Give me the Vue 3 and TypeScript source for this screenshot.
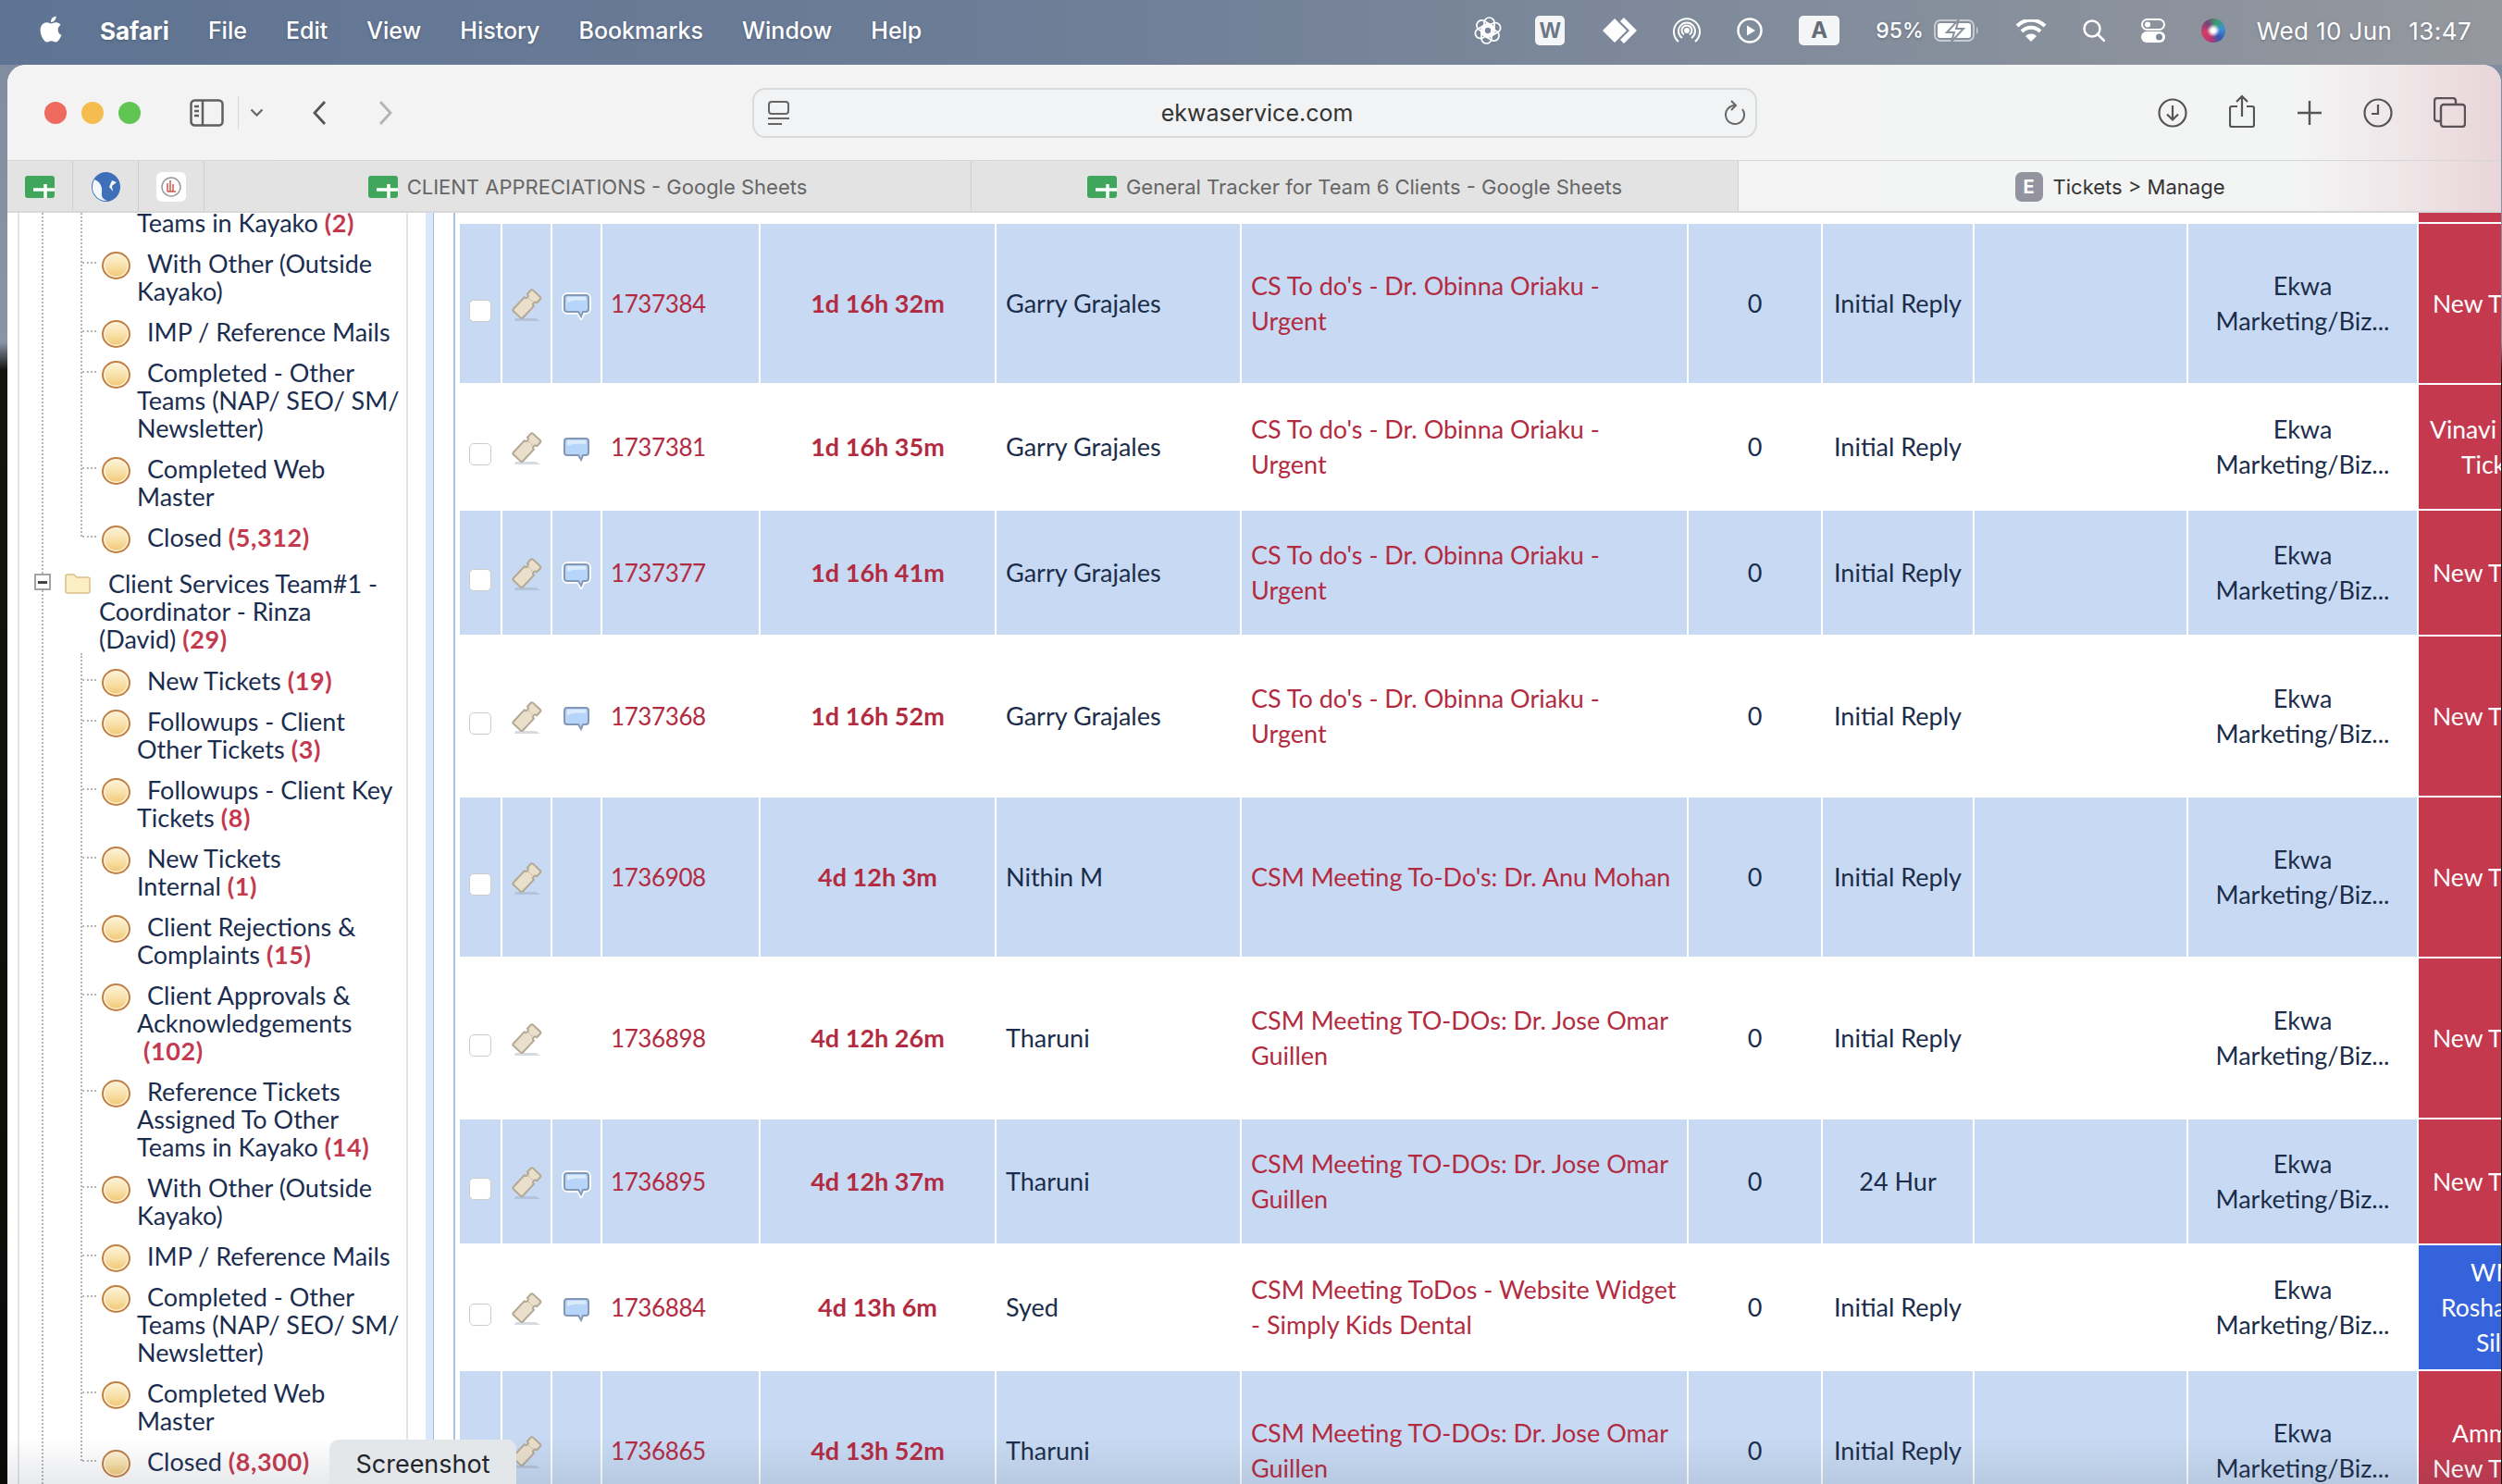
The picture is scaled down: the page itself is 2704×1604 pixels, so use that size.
<script setup lang="ts">
interface TreeItem {
  lines: string[];
  count?: string;
  cont?: boolean;
}

interface TagLine {
  text: string;
  left: number;
}

interface TicketRow {
  id: string;
  age: string;
  owner: string;
  subject: string[];
  rule: string;
  chat: boolean;
  tall: boolean;
  tag: TagLine[];
  tagBlue?: boolean;
}

const menus = ["File", "Edit", "View", "History", "Bookmarks", "Window", "Help"];

const firstGroup: TreeItem[] = [
  { lines: ["Teams in Kayako"], count: "(2)", cont: true },
  { lines: ["With Other (Outside", "Kayako)"] },
  { lines: ["IMP / Reference Mails"] },
  { lines: ["Completed - Other", "Teams (NAP/ SEO/ SM/", "Newsletter)"] },
  { lines: ["Completed Web", "Master"] },
  { lines: ["Closed"], count: "(5,312)" },
];

const secondGroup: TreeItem[] = [
  { lines: ["New Tickets"], count: "(19)" },
  { lines: ["Followups - Client", "Other Tickets"], count: "(3)" },
  { lines: ["Followups - Client Key", "Tickets"], count: "(8)" },
  { lines: ["New Tickets", "Internal"], count: "(1)" },
  { lines: ["Client Rejections &", "Complaints"], count: "(15)" },
  { lines: ["Client Approvals &", "Acknowledgements", ""], count: "(102)" },
  { lines: ["Reference Tickets", "Assigned To Other", "Teams in Kayako"], count: "(14)" },
  { lines: ["With Other (Outside", "Kayako)"] },
  { lines: ["IMP / Reference Mails"] },
  { lines: ["Completed - Other", "Teams (NAP/ SEO/ SM/", "Newsletter)"] },
  { lines: ["Completed Web", "Master"] },
  { lines: ["Closed"], count: "(8,300)" },
];

const csTodo = ["CS To do's - Dr. Obinna Oriaku -", "Urgent"];
const csmTodo = ["CSM Meeting TO-DOs: Dr. Jose Omar", "Guillen"];
const newTag: TagLine[] = [{ text: "New T", left: 15 }];

const rows: TicketRow[] = [
  { id: "1737384", age: "1d 16h 32m", owner: "Garry Grajales", subject: csTodo, rule: "Initial Reply", chat: true, tall: true, tag: newTag },
  {
    id: "1737381", age: "1d 16h 35m", owner: "Garry Grajales", subject: csTodo, rule: "Initial Reply", chat: true, tall: false,
    tag: [{ text: "Vinavi", left: 12 }, { text: "Tick", left: 46 }],
  },
  { id: "1737377", age: "1d 16h 41m", owner: "Garry Grajales", subject: csTodo, rule: "Initial Reply", chat: true, tall: false, tag: newTag },
  { id: "1737368", age: "1d 16h 52m", owner: "Garry Grajales", subject: csTodo, rule: "Initial Reply", chat: true, tall: true, tag: newTag },
  { id: "1736908", age: "4d 12h 3m", owner: "Nithin M", subject: ["CSM Meeting To-Do's: Dr. Anu Mohan"], rule: "Initial Reply", chat: false, tall: true, tag: newTag },
  { id: "1736898", age: "4d 12h 26m", owner: "Tharuni", subject: csmTodo, rule: "Initial Reply", chat: false, tall: true, tag: newTag },
  { id: "1736895", age: "4d 12h 37m", owner: "Tharuni", subject: csmTodo, rule: "24 Hur", chat: true, tall: false, tag: newTag },
  {
    id: "1736884", age: "4d 13h 6m", owner: "Syed", subject: ["CSM Meeting ToDos - Website Widget", "- Simply Kids Dental"], rule: "Initial Reply", chat: true, tall: false, tagBlue: true,
    tag: [{ text: "WM", left: 56 }, { text: "Rosha", left: 24 }, { text: "Sil", left: 62 }],
  },
  {
    id: "1736865", age: "4d 13h 52m", owner: "Tharuni", subject: csmTodo, rule: "Initial Reply", chat: false, tall: true,
    tag: [{ text: "Amm", left: 36 }, { text: "New T", left: 15 }],
  },
];

const colWidths = [44, 52, 52, 169, 253, 263, 481, 143, 162, 229, 247, 90];
</script>

<template>
  <div class="screen">
    <header class="menubar">
      <div class="menu-left">
        <svg class="apple" viewBox="0 0 24 24" fill="#fff" aria-hidden="true">
          <path d="M12.152 6.896c-.948 0-2.415-1.078-3.96-1.04-2.04.027-3.91 1.183-4.961 3.014-2.117 3.675-.546 9.103 1.519 12.09 1.013 1.454 2.208 3.09 3.792 3.039 1.52-.065 2.09-.987 3.935-.987 1.831 0 2.35.987 3.96.948 1.637-.026 2.676-1.48 3.676-2.948 1.156-1.688 1.636-3.325 1.662-3.415-.039-.013-3.182-1.221-3.22-4.857-.026-3.04 2.48-4.494 2.597-4.559-1.429-2.09-3.623-2.324-4.39-2.376-2-.156-3.675 1.09-4.61 1.09zM15.53 3.83c.843-1.012 1.4-2.427 1.245-3.83-1.207.052-2.662.805-3.532 1.818-.78.896-1.454 2.338-1.273 3.714 1.338.104 2.715-.688 3.559-1.701" />
        </svg>
        <strong class="app-name">Safari</strong>
        <span v-for="m in menus" :key="m" class="menu-item">{{ m }}</span>
      </div>

      <div class="menu-right">
        <svg class="knot" width="30" height="30" viewBox="0 0 30 30" fill="none" stroke="#fff" stroke-width="1.700" aria-hidden="true">
          <rect x="11" y="1" width="11" height="20" rx="5.500" />
          <rect x="11" y="1" width="11" height="20" rx="5.500" transform="rotate(120 15 15)" />
          <rect x="11" y="1" width="11" height="20" rx="5.500" transform="rotate(240 15 15)" />
          <rect x="11" y="1" width="11" height="20" rx="5.500" transform="rotate(60 15 15)" />
          <rect x="11" y="1" width="11" height="20" rx="5.500" transform="rotate(180 15 15)" />
          <rect x="11" y="1" width="11" height="20" rx="5.500" transform="rotate(300 15 15)" />
        </svg>
        <span class="menu-box wps">W</span>
        <svg class="anydesk" width="37" height="28" viewBox="0 0 37 28" fill="#fff" aria-hidden="true">
          <path d="M13 1l13 13-13 13L0 14zM23 0l14 14-14 14-4-4 10-10L19 4z" />
        </svg>
        <svg width="30" height="28" viewBox="0 0 30 28" fill="none" stroke="#fff" stroke-width="2" aria-hidden="true">
          <circle cx="15" cy="14" r="3" fill="#fff" stroke="none" />
          <path d="M10 22a9 9 0 1 1 10 0M6 26a14 14 0 1 1 18 0" />
          <path d="M12 18.500a5.500 5.500 0 1 1 6 0" />
        </svg>
        <svg width="28" height="28" viewBox="0 0 28 28" aria-hidden="true">
          <circle cx="14" cy="14" r="12.500" fill="none" stroke="#fff" stroke-width="2.500" />
          <path d="M11 8.500l9 5.500-9 5.500z" fill="#fff" />
        </svg>
        <span class="menu-box input-box">A</span>
        <span class="battery-pct">95%</span>
        <svg class="battery" width="49" height="24" viewBox="0 0 49 24" aria-hidden="true">
          <rect x="1" y="1" width="42" height="22" rx="6" fill="none" stroke="#fff" stroke-opacity=".55" stroke-width="2" />
          <rect x="4" y="4" width="36" height="16" rx="3" fill="#fff" />
          <path d="M46 8c2 1 2 7 0 8z" fill="#fff" fill-opacity=".6" />
          <path d="M27 0L14 14h8l-3 10 13-14h-8z" fill="#fff" stroke="#8a909c" stroke-width="2" />
        </svg>
        <svg width="34" height="24" viewBox="0 0 34 24" aria-hidden="true">
          <path d="M17 24l-6-6a8.500 8.500 0 0 1 12 0z" fill="#fff" />
          <path d="M7 13a14 14 0 0 1 20 0M2 7a21 21 0 0 1 30 0" fill="none" stroke="#fff" stroke-width="4" />
        </svg>
        <svg width="24" height="24" viewBox="0 0 24 24" fill="none" stroke="#fff" stroke-width="2.500" aria-hidden="true">
          <circle cx="10" cy="10" r="8.500" />
          <path d="M16 16l7 7" stroke-linecap="round" />
        </svg>
        <svg width="26" height="26" viewBox="0 0 26 26" aria-hidden="true">
          <rect x="1" y="1" width="24" height="11" rx="5.500" fill="none" stroke="#fff" stroke-width="2" />
          <circle cx="7" cy="6.500" r="3" fill="#fff" />
          <rect y="14" width="26" height="12" rx="6" fill="#fff" />
          <circle cx="19.500" cy="20" r="3.500" fill="#7f8794" />
        </svg>
        <span class="siri"></span>
        <span class="clock">
          <span>Wed 10 Jun</span>
          <span>13:47</span>
        </span>
      </div>
    </header>

    <div class="window">
      <div class="chrome">
        <div class="toolbar">
          <div class="lights">
            <span class="light red"></span>
            <span class="light yellow"></span>
            <span class="light green"></span>
          </div>
          <svg class="tool-sidebar" width="37" height="30" viewBox="0 0 37 30" fill="none" stroke="#5f5f5f" stroke-width="2.500" aria-hidden="true">
            <rect x="1.500" y="1.500" width="34" height="27" rx="4" />
            <path d="M14 1.500v27M5 8h5M5 13h5M5 18h5" />
          </svg>
          <span class="tool-divider"></span>
          <svg class="tool-chevron" width="15" height="9" viewBox="0 0 15 9" fill="none" stroke="#666" stroke-width="2.200" aria-hidden="true">
            <path d="M1.500 1.500l6 6 6-6" />
          </svg>
          <svg class="tool-back" width="16" height="28" viewBox="0 0 16 28" fill="none" stroke="#555" stroke-width="2.800" aria-hidden="true">
            <path d="M14 2L3 14l11 12" />
          </svg>
          <svg class="tool-forward" width="16" height="28" viewBox="0 0 16 28" fill="none" stroke="#b4b4b4" stroke-width="2.800" aria-hidden="true">
            <path d="M2 2l11 12L2 26" />
          </svg>

          <div class="urlbar">
            <svg width="23" height="26" viewBox="0 0 23 26" fill="none" stroke="#666" stroke-width="2" aria-hidden="true">
              <rect x="1" y="1" width="21" height="13" rx="3" />
              <path d="M0 19h23M0 25h15" />
            </svg>
            <span class="url-text">ekwaservice.com</span>
            <svg width="23" height="28" viewBox="0 0 23 28" fill="none" stroke="#666" stroke-width="2" aria-hidden="true">
              <path d="M19 10a10 10 0 1 1-8-4" />
              <path d="M7 1l5 5-5 5" />
            </svg>
          </div>

          <svg class="tool-download" width="32" height="32" viewBox="0 0 32 32" fill="none" stroke="#555" stroke-width="2.200" aria-hidden="true">
            <circle cx="16" cy="16" r="14.500" />
            <path d="M16 8v15M10 17.500l6 6 6-6" />
          </svg>
          <svg class="tool-share" width="28" height="36" viewBox="0 0 28 36" fill="none" stroke="#555" stroke-width="2.200" aria-hidden="true">
            <path d="M9 13H3a2 2 0 0 0-2 2v18a2 2 0 0 0 2 2h22a2 2 0 0 0 2-2V15a2 2 0 0 0-2-2h-6" />
            <path d="M14 24V2M8 8l6-6 6 6" />
          </svg>
          <svg class="tool-plus" width="26" height="26" viewBox="0 0 26 26" stroke="#555" stroke-width="2.400" aria-hidden="true">
            <path d="M13 0v26M0 13h26" />
          </svg>
          <svg class="tool-history" width="32" height="32" viewBox="0 0 32 32" fill="none" stroke="#555" stroke-width="2.200" aria-hidden="true">
            <circle cx="16" cy="16" r="14.500" />
            <path d="M16 7v10H9" />
          </svg>
          <svg class="tool-tabs" width="35" height="33" viewBox="0 0 35 33" fill="none" stroke="#5c5356" stroke-width="2.400" aria-hidden="true">
            <path d="M7 26H4a3 3 0 0 1-3-3V4a3 3 0 0 1 3-3h17a3 3 0 0 1 3 3v3" />
            <rect x="8" y="8" width="26" height="24" rx="3" />
          </svg>
        </div>

        <div class="tabs">
          <div class="tab tab-pin">
            <svg class="sheet-icon" width="32" height="24" viewBox="0 0 32 24" aria-hidden="true">
              <rect width="32" height="24" rx="3" fill="#3fa65c" />
              <path d="M9 15h23M22 9v15" stroke="#fff" stroke-width="3.500" />
            </svg>
          </div>
          <div class="tab tab-pin">
            <svg width="31" height="32" viewBox="0 0 31 32" aria-hidden="true">
              <ellipse cx="15.500" cy="16" rx="15.500" ry="16" fill="#3e6fb8" />
              <path d="M3 8c6 2 9 8 8 14s3 8 6 9C8 32 0 24 1 15c0-2 1-5 2-7zM22 9l-3 7 4 5-1-6 5-4z" fill="#f3f6fb" />
            </svg>
          </div>
          <div class="tab tab-pin">
            <svg width="32" height="32" viewBox="0 0 32 32" aria-hidden="true">
              <rect width="32" height="32" rx="6" fill="#fff" />
              <circle cx="16" cy="16" r="10" fill="none" stroke="#999" stroke-width="1.500" />
              <path d="M12 21V12M15 21V9M18 21V13M21 21h-9" stroke="#c9574f" stroke-width="1.500" />
            </svg>
          </div>
          <div class="tab tab-page">
            <svg width="32" height="24" viewBox="0 0 32 24" aria-hidden="true">
              <rect width="32" height="24" rx="3" fill="#3fa65c" />
              <path d="M9 15h23M22 9v15" stroke="#fff" stroke-width="3.500" />
            </svg>
            <span>CLIENT APPRECIATIONS - Google Sheets</span>
          </div>
          <div class="tab tab-page">
            <svg width="32" height="24" viewBox="0 0 32 24" aria-hidden="true">
              <rect width="32" height="24" rx="3" fill="#3fa65c" />
              <path d="M9 15h23M22 9v15" stroke="#fff" stroke-width="3.500" />
            </svg>
            <span>General Tracker for Team 6 Clients - Google Sheets</span>
          </div>
          <div class="tab tab-active">
            <span class="tab-letter">E</span>
            <span>Tickets &gt; Manage</span>
          </div>
        </div>
      </div>

      <div class="content">
        <aside class="tree">
          <ul class="branch branch-first">
            <li v-for="(item, i) in firstGroup" :key="i" class="leaf" :class="{ 'leaf-cont': item.cont }">
              <span v-if="!item.cont" class="bubble"></span>
              <template v-for="(line, n) in item.lines" :key="n">
                <br v-if="n > 0" />{{ line }}
              </template>
              <span v-if="item.count" class="count">{{ item.count }}</span>
            </li>
          </ul>

          <div class="folder-row">
            <span class="folder-toggle"></span>
            <svg class="folder-icon" width="28" height="24" viewBox="0 0 28 24" aria-hidden="true">
              <path d="M1 5a2 2 0 0 1 2-2h7l3 3h12a2 2 0 0 1 2 2v13a2 2 0 0 1-2 2H3a2 2 0 0 1-2-2z" fill="#fbeec3" stroke="#dcbf8a" stroke-width="1.500" />
            </svg>
            Client Services Team#1 -<br />Coordinator - Rinza<br />(David) <span class="count">(29)</span>
          </div>

          <ul class="branch branch-second">
            <li v-for="(item, i) in secondGroup" :key="i" class="leaf">
              <span class="bubble"></span>
              <template v-for="(line, n) in item.lines" :key="n">
                <br v-if="n > 0" />{{ line }}
              </template>
              <span v-if="item.count" class="count">{{ item.count }}</span>
            </li>
          </ul>
        </aside>

        <div class="splitter">
          <span class="splitter-bar"></span>
        </div>

        <main class="list">
          <table class="tickets">
            <colgroup>
              <col v-for="(w, i) in colWidths" :key="i" :style="{ width: w + 'px' }" />
            </colgroup>
            <tbody>
              <tr class="row-cut">
                <td colspan="11"></td>
                <td class="tag"></td>
              </tr>
              <tr v-for="(row, r) in rows" :key="row.id" :class="{ striped: r % 2 === 0, tall: row.tall }">
                <td class="cell-icon">
                  <span class="check"></span>
                </td>
                <td class="cell-icon">
                  <svg class="ticket-icon" width="34" height="36" viewBox="0 0 34 36" aria-hidden="true">
                    <path d="M5 32h22l5 3H4z" fill="#8d99a8" fill-opacity=".35" />
                    <g transform="rotate(-47 17 17)">
                      <path d="M4 10H21a2.500 2.500 0 0 0 5 0H31a2 2 0 0 1 2 2V22a2 2 0 0 1-2 2H26a2.500 2.500 0 0 0-5 0H4a2 2 0 0 1-2-2V12a2 2 0 0 1 2-2z" fill="#eadfcb" stroke="#b3a894" stroke-width="2" />
                      <path d="M23.500 14v6" stroke="#cfc3ad" stroke-width="1.500" stroke-dasharray="2 1.500" />
                    </g>
                  </svg>
                </td>
                <td class="cell-icon">
                  <svg v-if="row.chat" class="chat-icon" width="32" height="30" viewBox="0 0 32 30" aria-hidden="true">
                    <path d="M6 2h20a4 4 0 0 1 4 4v12a4 4 0 0 1-4 4h-2l-3 6-3-6H6a4 4 0 0 1-4-4V6a4 4 0 0 1 4-4z" fill="none" stroke="#fff" stroke-width="3.500" />
                    <path d="M6 3h20a3 3 0 0 1 3 3v12a3 3 0 0 1-3 3h-3l-2 5-3-5H6a3 3 0 0 1-3-3V6a3 3 0 0 1 3-3z" fill="#b6d5f8" stroke="#8398b6" stroke-width="2" />
                    <path d="M6 5h20v4c-6-1-14-1-20 2z" fill="#dcebfb" />
                  </svg>
                </td>
                <td class="cell-id">{{ row.id }}</td>
                <td class="cell-age">{{ row.age }}</td>
                <td class="cell-text">{{ row.owner }}</td>
                <td class="cell-subject">
                  <div v-for="line in row.subject" :key="line">{{ line }}</div>
                </td>
                <td class="cell-center">0</td>
                <td class="cell-center">{{ row.rule }}</td>
                <td></td>
                <td class="cell-center">
                  <div>Ekwa</div>
                  <div>Marketing/Biz...</div>
                </td>
                <td class="tag" :class="{ 'tag-blue': row.tagBlue }">
                  <div v-for="line in row.tag" :key="line.text" :style="{ marginLeft: line.left + 'px' }">{{ line.text }}</div>
                </td>
              </tr>
            </tbody>
          </table>
        </main>

        <div class="bottom-fade"></div>
        <div class="shot-label">Screenshot</div>
      </div>
    </div>
  </div>
</template>

<style>
html,
body {
  margin: 0;
  background: #0a0b08;
}
</style>

<style scoped>
.screen {
  position: relative;
  width: 2704px;
  height: 1604px;
  overflow: hidden;
  display: flex;
  flex-direction: column;
  font-family: Inter, "Liberation Sans", sans-serif;
  background: linear-gradient(180deg, #7e8ba0 0, #8a94a4 370px, #14150f 400px, #0a0b08 100%);
}

/* menu bar */
.menubar {
  flex: none;
  height: 70px;
  display: flex;
  justify-content: space-between;
  align-items: center;
  box-sizing: border-box;
  padding: 0 33px 4px 41px;
  color: #fff;
  font-size: 25px;
  background: linear-gradient(90deg, #5f7493 0, #6d7d97 40%, #808b9b 70%, #95989e 100%);
  text-shadow: 0 1px 3px rgba(40, 50, 70, 0.35);
}

.menu-left {
  display: flex;
  align-items: center;
  gap: 42px;
}

.apple {
  width: 28px;
  height: 31px;
  margin: -4px -3px 0 0;
}

.app-name {
  font-size: 26px;
  font-weight: 700;
}

.menu-item {
  font-weight: 500;
}

.menu-right {
  display: flex;
  align-items: center;
  gap: 39px;
}

.menu-right svg {
  display: block;
}

.menu-right .knot {
  margin-right: -3px;
}

.menu-right .anydesk {
  margin-left: 2px;
}

.menu-box {
  display: block;
  height: 32px;
  border-radius: 5px;
  background: #f4f5f6;
  color: #6b7686;
  font-size: 24px;
  line-height: 32px;
  text-align: center;
  text-shadow: none;
  font-weight: 700;
}

.wps {
  width: 32px;
  font-family: "Liberation Sans", sans-serif;
}

.input-box {
  width: 44px;
  color: #666c76;
}

.battery-pct {
  font-size: 23px;
  font-weight: 500;
}

.menu-right .battery {
  margin-left: -28px;
}

.siri {
  width: 26px;
  height: 26px;
  border-radius: 50%;
  background: radial-gradient(circle at 50% 50%, #fff 0 12%, transparent 38%),
    conic-gradient(from 20deg, #3a9f6e, #3f8fd8, #3356b5, #c0356b, #d2406a, #7a3f7c, #3a9f6e);
}

.clock {
  display: flex;
  gap: 18px;
  margin-left: -5px;
  font-size: 26px;
  letter-spacing: 0.4px;
  font-weight: 400;
}

/* safari chrome */
.window {
  flex: 1;
  min-height: 0;
  margin: 0 1px 0 8px;
  display: flex;
  flex-direction: column;
  border-radius: 20px 20px 0 0;
  overflow: hidden;
  background: #fff;
}

.chrome {
  flex: none;
  background: linear-gradient(90deg, #f3f3f3 0, #f3f4f4 92%, #efe6e8 96%, #e8d5d9 100%);
  border-bottom: 2px solid #d8d8d8;
}

.toolbar {
  height: 104px;
  display: flex;
  align-items: center;
  box-sizing: border-box;
  padding-left: 40px;
  border-bottom: 1px solid #d6d6d6;
}

.lights {
  display: flex;
  gap: 16px;
}

.light {
  width: 24px;
  height: 24px;
  border-radius: 50%;
}

.red {
  background: #ee6a5f;
}

.yellow {
  background: #f5bd4f;
}

.green {
  background: #61c554;
}

.tool-sidebar {
  margin-left: 53px;
}

.tool-divider {
  width: 1px;
  height: 36px;
  margin-left: 15px;
  background: #d8d8d8;
}

.tool-chevron {
  margin-left: 12px;
}

.tool-back {
  margin-left: 52px;
}

.tool-forward {
  margin-left: 56px;
}

.urlbar {
  width: 1086px;
  height: 54px;
  margin-left: 388px;
  box-sizing: border-box;
  display: flex;
  align-items: center;
  justify-content: space-between;
  padding: 0 10px 0 15px;
  border: 2px solid #dadada;
  border-radius: 14px;
  background: #f2f3f4;
}

.url-text {
  font-family: Inter, "Liberation Sans", sans-serif;
  font-size: 25px;
  color: #333;
}

.tool-download {
  margin-left: 433px;
}

.tool-share {
  margin-left: 45px;
  margin-top: -4px;
}

.tool-plus {
  margin-left: 46px;
}

.tool-history {
  margin-left: 45px;
}

.tool-tabs {
  margin-left: 44px;
}

.tabs {
  height: 54px;
  display: flex;
}

.tab {
  display: flex;
  align-items: center;
  justify-content: center;
  box-sizing: border-box;
  padding-top: 2px;
  font-size: 22px;
  color: #666;
  background: #e3e3e3;
  border-right: 1px solid #cfcfcf;
}

.tab-pin {
  width: 71px;
}

.tab-page {
  width: 829px;
  gap: 10px;
}

.tab-active {
  flex: 1;
  gap: 11px;
  background: transparent;
  border-right: 0;
  color: #333;
}

.tab-letter {
  width: 30px;
  height: 32px;
  border-radius: 7px;
  background: #93949f;
  color: #fff;
  font-weight: 700;
  font-size: 20px;
  line-height: 32px;
  text-align: center;
}

/* tree sidebar */
.content {
  position: relative;
  flex: 1;
  min-height: 0;
  display: flex;
  overflow: hidden;
  background: #fff;
  font-family: Lato, "Open Sans", sans-serif;
  font-size: 27px;
  color: #1b2d4f;
}

.tree {
  position: relative;
  flex: none;
  width: 422px;
  margin-left: 11px;
  box-sizing: border-box;
  border-left: 2px solid #e4e4e4;
  border-right: 2px solid #e4e4e4;
  line-height: 30px;
  white-space: nowrap;
}

.tree::before {
  content: "";
  position: absolute;
  top: 0;
  bottom: 0;
  left: 24px;
  border-left: 2px dotted #b5b5b5;
}

.branch {
  position: relative;
  margin: 0 0 0 66px;
  padding: 0;
  list-style: none;
}

.branch::before {
  content: "";
  position: absolute;
  left: 0;
  top: 0;
  bottom: 30px;
  border-left: 2px dotted #b5b5b5;
}

.branch-first {
  margin-top: -4px;
}

.branch-second {
  padding-top: 15px;
}

.leaf {
  position: relative;
  padding: 0 0 14px 61px;
}

.leaf::before {
  content: "";
  position: absolute;
  left: 2px;
  top: 13px;
  width: 15px;
  border-top: 2px dotted #b5b5b5;
}

.leaf-cont::before {
  display: none;
}

.bubble {
  display: inline-block;
  box-sizing: border-box;
  width: 31px;
  height: 30px;
  margin: 0 18px 0 -38px;
  vertical-align: top;
  transform: translateY(2px);
  border: 2px solid #c17f41;
  border-radius: 50%;
  box-shadow: inset 0 0 0 1.500px #fff4df;
  background: linear-gradient(180deg, #fdf3d8, #f8dfa6 55%, #f2c671);
}

.count {
  color: #c4394e;
  font-weight: 700;
  letter-spacing: 0.6px;
}

.leaf .count {
  margin-left: 7px;
}

.folder-row {
  position: relative;
  margin-top: 6px;
  padding-left: 86px;
}

.folder-toggle {
  position: absolute;
  left: 16px;
  top: 4px;
  box-sizing: border-box;
  width: 18px;
  height: 18px;
  border: 2px solid #a3a3a3;
  background: linear-gradient(#444, #444) center / 10px 3px no-repeat #fff;
}

.folder-icon {
  display: inline-block;
  vertical-align: top;
  margin: 2px 12px 0 -37px;
}

/* ticket list */
.splitter {
  flex: none;
  width: 28px;
  display: flex;
  justify-content: flex-end;
}

.splitter-bar {
  width: 8px;
  background: #dbe7fb;
  border-right: 1px solid #9fbbe3;
}

.list {
  flex: 1;
  min-width: 0;
  overflow: hidden;
  margin-left: 21px;
  padding-left: 3px;
  border-left: 2px solid #a9c3e6;
}

.tickets {
  table-layout: fixed;
  width: 2211px;
  margin-top: -2px;
  border-collapse: separate;
  border-spacing: 2px;
  font-size: 27px;
  line-height: 38px;
  color: #1b2d4a;
}

.tickets td {
  box-sizing: border-box;
  height: 134px;
  padding: 0 10px;
  white-space: nowrap;
  overflow: hidden;
}

.tickets .row-cut td {
  height: 10px;
  line-height: 0;
}

.tickets tr.tall td {
  height: 172px;
}

.striped td {
  background: #c8daf3;
}

.tickets td.cell-icon {
  padding: 0;
  text-align: center;
}

.check {
  display: inline-block;
  box-sizing: border-box;
  width: 24px;
  height: 24px;
  margin-top: 12px;
  vertical-align: middle;
  border: 1px solid #cdcdcd;
  border-radius: 5px;
  background: #fff;
}

.ticket-icon {
  vertical-align: middle;
}

.chat-icon {
  vertical-align: middle;
}

.cell-id,
.cell-age,
.cell-subject {
  color: #b32b41;
}

.tickets td.cell-id {
  padding-left: 9px;
  font-size: 26px;
  letter-spacing: -0.4px;
}

.cell-age {
  text-align: center;
  font-weight: 700;
}

.cell-center {
  text-align: center;
}

.tickets td.tag {
  padding: 0;
  font-size: 26.500px;
  background: #c4394e;
  color: #fff;
}

.tickets td.tag-blue {
  background: #3563dc;
}

.bottom-fade {
  position: absolute;
  left: 0;
  right: 0;
  bottom: 0;
  height: 50px;
  background: linear-gradient(180deg, rgba(70, 80, 100, 0), rgba(70, 80, 100, 0.12));
  pointer-events: none;
}

.shot-label {
  position: absolute;
  left: 348px;
  bottom: 0;
  width: 202px;
  height: 48px;
  box-sizing: border-box;
  padding-top: 6px;
  border-radius: 10px 10px 0 0;
  background: #e4e7ea;
  font-family: Inter, "Liberation Sans", sans-serif;
  font-size: 27px;
  line-height: 42px;
  text-align: center;
  color: #22252a;
}
</style>
